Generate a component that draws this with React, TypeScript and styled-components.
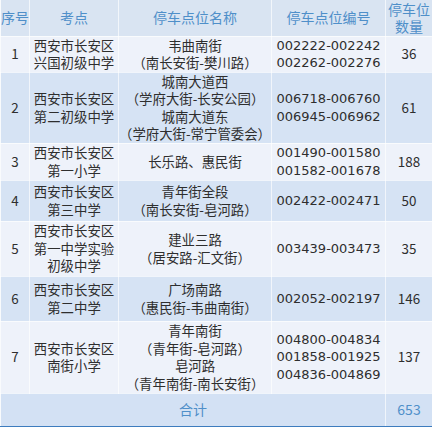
import React from 'react';
import styled, { createGlobalStyle } from 'styled-components';

const GlobalStyle = createGlobalStyle`
  html, body {
    margin: 0;
    padding: 0;
    background: #eef2fa;
  }
`;

type Row = {
  no: string;
  school: string[];
  places: string[];
  codes: string[];
  count: string;
  height: number;
};

const ROWS: Row[] = [
  {
    no: '1', school: ['西安市长安区', '兴国初级中学'], places: ['韦曲南街', '（南长安街-樊川路）'],
    codes: ['002222-002242', '002262-002276'], count: '36', height: 36,
  },
  {
    no: '2', school: ['西安市长安区', '第二初级中学'],
    places: ['城南大道西', '（学府大街-长安公园）', '城南大道东', '（学府大街-常宁管委会）'],
    codes: ['006718-006760', '006945-006962'], count: '61', height: 68,
  },
  {
    no: '3', school: ['西安市长安区', '第一小学'], places: ['长乐路、惠民街'],
    codes: ['001490-001580', '001582-001678'], count: '188', height: 37,
  },
  {
    no: '4', school: ['西安市长安区', '第三中学'], places: ['青年街全段', '（南长安街-皂河路）'],
    codes: ['002422-002471'], count: '50', height: 41,
  },
  {
    no: '5', school: ['西安市长安区', '第一中学实验', '初级中学'], places: ['建业三路', '（居安路-汇文街）'],
    codes: ['003439-003473'], count: '35', height: 55,
  },
  {
    no: '6', school: ['西安市长安区', '第二中学'], places: ['广场南路', '（惠民街-韦曲南街）'],
    codes: ['002052-002197'], count: '146', height: 45,
  },
  {
    no: '7', school: ['西安市长安区', '南街小学'],
    places: ['青年南街', '（青年街-皂河路）', '皂河路', '（青年南街-南长安街）'],
    codes: ['004800-004834', '001858-001925', '004836-004869'], count: '137', height: 72,
  },
];

const Sheet = styled.table`
  width: 432px;
  border-collapse: collapse;
  table-layout: fixed;
  border-bottom: 3px solid #3d7cbe;
  font-family: "Noto Sans CJK SC", "Noto Sans", sans-serif;
  font-size: 13.4px;
  color: #2e2e2e;
`;

const BodyRow = styled.tr<{ $dark: boolean }>`
  background: ${(p) => (p.$dark ? '#d6e3f4' : '#eef2fa')};
`;

const HeadRow = styled.tr`
  background: #d9e4f2;
  height: 36px;
`;

const HeadCell = styled.th`
  padding: 0;
  font-weight: normal;
  font-size: 14px;
  line-height: 17px;
  color: #4f8fc9;
  text-align: center;
  vertical-align: middle;
  border: 1px solid rgba(255, 255, 255, 0.65);
  border-top: none;
`;

const Cell = styled.td<{ $mono?: boolean }>`
  padding: 0;
  text-align: center;
  vertical-align: middle;
  line-height: 17.5px;
  white-space: nowrap;
  border: 1px solid rgba(255, 255, 255, 0.65);
  font-family: ${(p) => (p.$mono ? '"DejaVu Sans", sans-serif' : 'inherit')};
  font-size: ${(p) => (p.$mono ? '13px' : 'inherit')};
`;

const Line = styled.div``;

const TotalRow = styled.tr`
  background: #d3e1f4;
  height: 34px;
`;

const TotalCell = styled(Cell)`
  color: #4f8fc9;
  font-size: 14px;
`;

function Lines({ items }: { items: string[] }) {
  return (
    <>
      {items.map((t) => <Line key={t}>{t}</Line>)}
    </>
  );
}

export default function App() {
  return (
    <>
      <GlobalStyle />
      <Sheet>
        <colgroup>
          <col style={{ width: 29 }} />
          <col style={{ width: 89 }} />
          <col style={{ width: 153 }} />
          <col style={{ width: 114 }} />
          <col style={{ width: 47 }} />
        </colgroup>
        <thead>
          <HeadRow>
            <HeadCell>序号</HeadCell>
            <HeadCell>考点</HeadCell>
            <HeadCell>停车点位名称</HeadCell>
            <HeadCell>停车点位编号</HeadCell>
            <HeadCell>停车位<br />数量</HeadCell>
          </HeadRow>
        </thead>
        <tbody>
          {ROWS.map((r, i) => (
            <BodyRow key={r.no} $dark={i % 2 === 1} style={{ height: r.height }}>
              <Cell>{r.no}</Cell>
              <Cell><Lines items={r.school} /></Cell>
              <Cell><Lines items={r.places} /></Cell>
              <Cell $mono><Lines items={r.codes} /></Cell>
              <Cell>{r.count}</Cell>
            </BodyRow>
          ))}
          <TotalRow>
            <TotalCell colSpan={4}>合计</TotalCell>
            <TotalCell>653</TotalCell>
          </TotalRow>
        </tbody>
      </Sheet>
    </>
  );
}
